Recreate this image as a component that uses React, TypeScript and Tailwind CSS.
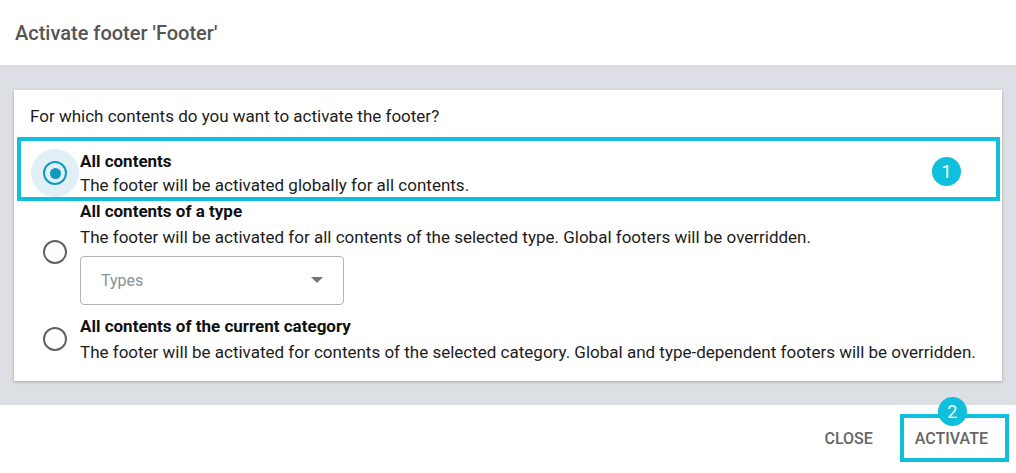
const CYAN = "#0fbfdc";

export default function App() {
  return (
    <div className="flex h-[473px] w-[1016px] flex-col overflow-hidden bg-white font-['Roboto',sans-serif]">
      {/* Dialog header */}
      <header className="flex h-[65px] shrink-0 items-center px-[15px]">
        <h1 className="text-[20px] font-medium text-[#555]">Activate footer 'Footer'</h1>
      </header>

      {/* Dialog body */}
      <main className="h-[340px] shrink-0 bg-[#dcdfe3] px-[14px] pt-[25px]">
        <div className="bg-white px-4 pb-[17px] pt-[15px] shadow-[0_1px_3px_rgba(0,0,0,0.25)]">
          <p className="text-[17px] leading-[22px] text-[#1c1c1c]">
            For which contents do you want to activate the footer?
          </p>

          <div className="mt-[22px] flex flex-col">
            <div className="relative flex items-center">
              <span
                aria-hidden
                className="pointer-events-none absolute -bottom-[4px] -left-[13px] -right-[14px] -top-[12px] border-4"
                style={{ borderColor: CYAN }}
              />
              <Radio checked />
              <OptionText
                title="All contents"
                body="The footer will be activated globally for all contents."
              />
              <Badge n={1} className="absolute right-[25px] top-[8px]" />
            </div>

            <div className="mt-[2px] flex items-center">
              <Radio />
              <div className="flex flex-col">
                <OptionText
                  title="All contents of a type"
                  body="The footer will be activated for all contents of the selected type. Global footers will be overridden."
                  gap
                />
                <div className="mt-[7px] flex h-[49px] w-[264px] items-center justify-between rounded border border-[#b5b5b5] pl-5 pr-[20px]">
                  <span className="text-[16px] text-[#8a8f99]">Types</span>
                  <svg width="12" height="7" viewBox="0 0 12 7" aria-hidden>
                    <path d="M0 0 L12 0 L6 6 Z" fill="#777" />
                  </svg>
                </div>
              </div>
            </div>

            <div className="mt-[9px] flex items-center">
              <Radio />
              <OptionText
                title="All contents of the current category"
                body="The footer will be activated for contents of the selected category. Global and type-dependent footers will be overridden."
                gap
              />
            </div>
          </div>
        </div>
      </main>

      {/* Dialog actions */}
      <footer className="flex flex-1 items-center justify-end gap-[20px] pr-[17px]">
        <button className="px-[11px] py-2 text-[16px] font-medium uppercase leading-6 text-[#666]">Close</button>
        <div className="relative">
          <span
            aria-hidden
            className="pointer-events-none absolute -bottom-[3px] -left-[4px] -right-[10px] -top-[5px] border-4"
            style={{ borderColor: CYAN }}
          />
          <Badge n={2} className="absolute -top-[22px] left-[34px]" />
          <button className="px-[11px] py-2 text-[16px] font-medium uppercase leading-6 text-[#666]">Activate</button>
        </div>
      </footer>
    </div>
  );
}

function Radio({ checked = false }: { checked?: boolean }) {
  return (
    <div className="flex w-[50px] shrink-0 items-center justify-center">
      <div
        className={`grid h-[48px] w-[48px] place-items-center rounded-full ${checked ? "bg-[#e0f0f6]" : ""}`}
      >
        <div
          className={`grid h-[24px] w-[24px] place-items-center rounded-full border-2 ${
            checked ? "border-[#0e9bbf]" : "border-[#5f6368]"
          }`}
        >
          {checked && <div className="h-[11px] w-[11px] rounded-full bg-[#0e9bbf]" />}
        </div>
      </div>
    </div>
  );
}

function OptionText({ title, body, gap = false }: { title: string; body: string; gap?: boolean }) {
  return (
    <div className="flex flex-col">
      <div className="text-[17px] font-bold leading-6 text-[#111]">{title}</div>
      <div className={`text-[17px] leading-6 text-[#1c1c1c] ${gap ? "mt-[2px]" : ""}`}>{body}</div>
    </div>
  );
}

function Badge({ n, className }: { n: number; className: string }) {
  return (
    <span
      className={`grid h-[29px] w-[29px] place-items-center rounded-full text-[18px] leading-none text-white ${className}`}
      style={{ backgroundColor: CYAN }}
    >
      {n}
    </span>
  );
}
